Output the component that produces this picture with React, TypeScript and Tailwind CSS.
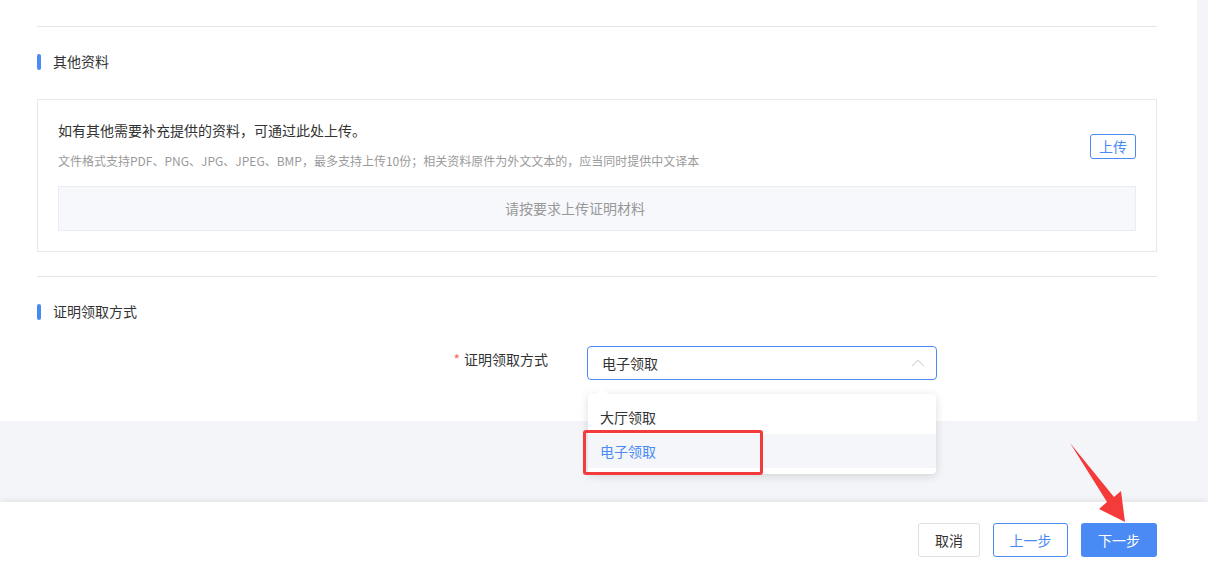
import { ChevronUp } from 'lucide-react';

const font = { fontFamily: '"Noto Sans CJK SC", "Noto Sans", sans-serif' };

function SectionTitle({ title }: { title: string }) {
  return (
    <div className="flex h-[16px] items-center">
      <span className="h-[16px] w-[4px] rounded-[2px] bg-[#4a8af4]" />
      <span className="ml-[12px] -mt-[3px] text-[14px] leading-[16px] text-[#333]">{title}</span>
    </div>
  );
}

export default function App() {
  return (
    <div className="relative flex h-[569px] w-[1208px] flex-col overflow-hidden bg-[#f4f5f9]" style={font}>
      <div className="h-[421px] w-[1197px] bg-white px-[37px] pt-[26px]">
        <div className="mr-[3px] h-px bg-[#e6e6e6]" />

        <div className="mt-[27px]">
          <SectionTitle title="其他资料" />
        </div>

        <div className="mr-[3px] mt-[29px] border border-[#e8e8e8] p-[20px]">
          <div className="flex items-start justify-between">
            <div>
              <p className="text-[14px] leading-[20px] text-[#333]">如有其他需要补充提供的资料，可通过此处上传。</p>
              <p className="mt-[13px] text-[12px] leading-[16px] text-[#9a9a9a]">
                文件格式支持PDF、PNG、JPG、JPEG、BMP，最多支持上传10份；相关资料原件为外文文本的，应当同时提供中文译本
              </p>
            </div>
            <button className="mt-[14px] flex h-[25px] w-[46px] items-center justify-center rounded-[3px] border border-[#4a8af4] text-[14px] text-[#4a8af4]">
              上传
            </button>
          </div>
          <div className="mt-[17px] flex h-[45px] items-center justify-center border border-[#ebedf2] bg-[#f7f8fc] pr-[44px] text-[14px] text-[#999]">
            请按要求上传证明材料
          </div>
        </div>

        <div className="mr-[3px] mt-[24px] h-px bg-[#e6e6e6]" />

        <div className="mt-[27px]">
          <SectionTitle title="证明领取方式" />
        </div>

        <div className="mt-[26px] flex items-start">
          <div className="w-[511px] pt-[5px] text-right text-[14px] leading-[16px] text-[#333]">
            <span className="mr-[4px] text-[#f56c6c]">*</span>证明领取方式
          </div>
          <div className="relative ml-[39px] w-[350px]">
            <div className="flex h-[34px] items-center justify-between rounded-[4px] border border-[#4a8af4] pl-[14px] pr-[7px] text-[14px] text-[#333]">
              <span>电子领取</span>
              <ChevronUp className="h-[22px] w-[22px] text-[#c8ccd4]" strokeWidth={1.1} />
            </div>

            <div className="absolute left-px top-[48px] z-10 w-[348px] rounded-[4px] bg-white py-[6px] shadow-[0_2px_10px_rgba(0,0,0,0.14)]">
              <span className="absolute -top-[6px] left-[8px] h-0 w-0 border-x-[6px] border-b-[6px] border-x-transparent border-b-white" />
              <div className="flex h-[34px] items-center px-[12px] text-[14px] text-[#333]">大厅领取</div>
              <div className="flex h-[34px] items-center bg-[#f5f6fa] px-[12px] text-[14px] text-[#4a8af4]">电子领取</div>
              <div className="absolute -left-[5px] top-[36px] h-[45px] w-[180px] rounded-[3px] border-[3px] border-[#f43b3b]" />
            </div>
          </div>
        </div>
      </div>

      <div className="flex-1" />

      <div className="flex h-[67px] items-start justify-end gap-[13px] bg-white pr-[51px] pt-[21px] shadow-[0_-2px_6px_rgba(0,0,0,0.07)]">
        <button className="h-[34px] w-[62px] rounded-[3px] border border-[#dcdfe6] text-[14px] text-[#333]">取消</button>
        <button className="h-[34px] w-[75px] rounded-[3px] border border-[#4a8af4] text-[14px] text-[#4a8af4]">上一步</button>
        <button className="h-[34px] w-[76px] rounded-[3px] bg-[#4a8af4] text-[14px] text-white">下一步</button>
      </div>

      <svg className="pointer-events-none absolute left-0 top-0" width="1208" height="569">
        <polygon
          points="1070,443 1114,497 1121,491 1125,522 1099,509 1107,502"
          fill="#f53a3a"
        />
      </svg>
    </div>
  );
}
